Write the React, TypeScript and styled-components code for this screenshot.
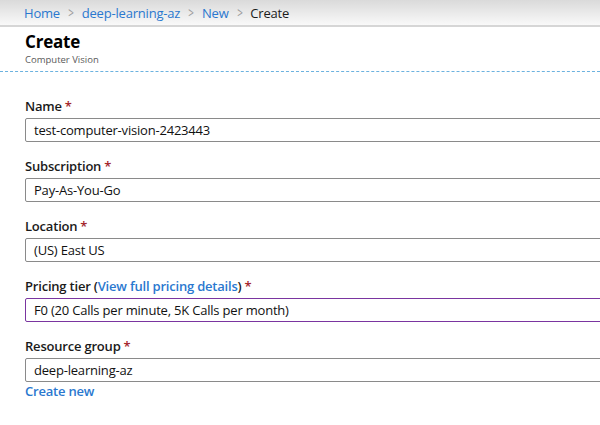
import * as React from "react";
import styled, { createGlobalStyle } from "styled-components";

const GlobalStyle = createGlobalStyle`
  html, body {
    margin: 0;
    padding: 0;
    background: #ffffff;
    overflow: hidden;
  }
  body {
    font-family: "Open Sans", "Noto Sans", "Liberation Sans", sans-serif;
    color: #000000;
  }
`;

const Page = styled.div`
  width: 600px;
  height: 425px;
  overflow: hidden;
  background: #ffffff;
`;

const Breadcrumb = styled.nav`
  height: 25px;
  display: flex;
  align-items: center;
  gap: 7px;
  padding: 0 0 0 24px;
  background: linear-gradient(#dadada, #f9f9f9);
  border-bottom: 2px solid #d6d6d6;
  font-size: 13px;
  letter-spacing: -0.2px;
`;

const Crumb = styled.span<{ $current?: boolean }>`
  color: ${({ $current }) => ($current ? "#1b1b1b" : "#2a78cf")};
`;

const Chevron = styled.span`
  color: #9a9a9a;
  font-size: 14px;
  transform: scaleX(0.7);
  display: inline-block;
`;

const Header = styled.header`
  padding: 4px 0 4px 25px;
  border-bottom: 1px dashed #6cb2df;
`;

const Title = styled.h1`
  margin: 0;
  font-size: 17px;
  line-height: 22px;
  font-weight: 700;
  letter-spacing: -0.2px;
`;

const Subtitle = styled.div`
  font-size: 9.5px;
  line-height: 14px;
  color: #5a5a5a;
`;

const Form = styled.form`
  display: flex;
  flex-direction: column;
  gap: 16px;
  padding: 26px 0 0 25px;
`;

const Field = styled.div`
  display: flex;
  flex-direction: column;
  gap: 4px;
`;

const Label = styled.label`
  font-size: 13px;
  line-height: 16px;
  font-weight: 600;
  color: #1a1a1a;
  letter-spacing: -0.2px;
`;

const Required = styled.span`
  color: #a4262c;
  margin-left: 3px;
`;

const LabelLink = styled.a`
  color: #2a78cf;
  text-decoration: none;
`;

const Input = styled.div<{ $focused?: boolean }>`
  width: 620px;
  height: 22px;
  display: flex;
  align-items: center;
  padding: 0 8px;
  border: 1px solid ${({ $focused }) => ($focused ? "#7a35a0" : "#8a8a8a")};
  border-radius: 2px;
  font-size: 13px;
  color: #111111;
  letter-spacing: -0.2px;
`;

const CreateLink = styled.a`
  margin-top: -3px;
  font-size: 13px;
  font-weight: 600;
  color: #2a78cf;
  text-decoration: none;
  line-height: 17px;
  letter-spacing: -0.2px;
`;

const crumbs = ["Home", "deep-learning-az", "New"];

export default function App() {
  return (
    <Page>
      <GlobalStyle />
      <Breadcrumb>
        {crumbs.map((c) => (
          <React.Fragment key={c}>
            <Crumb>{c}</Crumb>
            <Chevron>&gt;</Chevron>
          </React.Fragment>
        ))}
        <Crumb $current>Create</Crumb>
      </Breadcrumb>

      <Header>
        <Title>Create</Title>
        <Subtitle>Computer Vision</Subtitle>
      </Header>

      <Form>
        <Field>
          <Label>
            Name<Required>*</Required>
          </Label>
          <Input>test-computer-vision-2423443</Input>
        </Field>
        <Field>
          <Label>
            Subscription<Required>*</Required>
          </Label>
          <Input>Pay-As-You-Go</Input>
        </Field>
        <Field>
          <Label>
            Location<Required>*</Required>
          </Label>
          <Input>(US) East US</Input>
        </Field>
        <Field>
          <Label>
            Pricing tier (<LabelLink>View full pricing details</LabelLink>)
            <Required>*</Required>
          </Label>
          <Input $focused>F0 (20 Calls per minute, 5K Calls per month)</Input>
        </Field>
        <Field>
          <Label>
            Resource group<Required>*</Required>
          </Label>
          <Input>deep-learning-az</Input>
          <CreateLink>Create new</CreateLink>
        </Field>
      </Form>
    </Page>
  );
}
